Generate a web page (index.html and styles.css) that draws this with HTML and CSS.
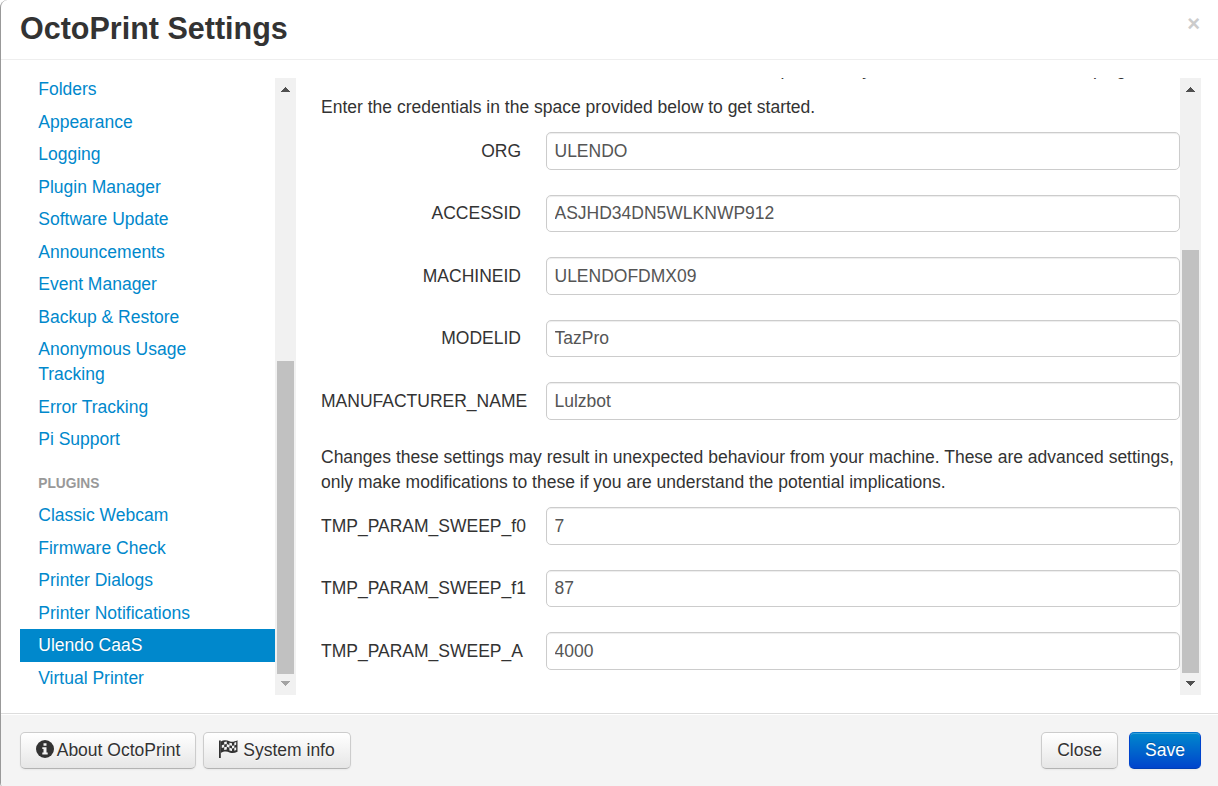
FILE: index.html
```html
<!DOCTYPE html>
<html lang="en">
<head>
<meta charset="utf-8">
<title>OctoPrint Settings</title>
<link rel="stylesheet" href="styles.css">
</head>
<body>
<div class="modal">
  <header class="modal-header">
    <h3>OctoPrint Settings</h3>
    <button class="close" aria-label="Close dialog">×</button>
  </header>
  <main class="modal-body">
    <div class="pane sidebar">
      <ul class="nav">
        <li><a>Folders</a></li>
        <li><a>Appearance</a></li>
        <li><a>Logging</a></li>
        <li><a>Plugin Manager</a></li>
        <li><a>Software Update</a></li>
        <li><a>Announcements</a></li>
        <li><a>Event Manager</a></li>
        <li><a>Backup &amp; Restore</a></li>
        <li><a>Anonymous Usage Tracking</a></li>
        <li><a>Error Tracking</a></li>
        <li><a>Pi Support</a></li>
        <li class="nav-header">Plugins</li>
        <li><a>Classic Webcam</a></li>
        <li><a>Firmware Check</a></li>
        <li><a>Printer Dialogs</a></li>
        <li><a>Printer Notifications</a></li>
        <li class="active"><a>Ulendo CaaS</a></li>
        <li><a>Virtual Printer</a></li>
      </ul>
      <div class="scrollbar">
        <svg class="arrow" viewBox="0 0 21 21"><path d="M6 14L10.500 9L15 14z"/></svg>
        <div class="track"><div class="thumb thumb-nav"></div></div>
        <svg class="arrow dim" viewBox="0 0 21 21"><path d="M6 7L10.500 12L15 7z"/></svg>
      </div>
    </div>
    <div class="pane content">
      <form class="form">
        <p class="lead-line"><span>You need to have an account and the credentials</span><span>provided by Ulendo in order to use the</span><span>plugin</span></p>
        <p>Enter the credentials in the space provided below to get started.</p>
        <div class="group"><label>ORG</label><input value="ULENDO"></div>
        <div class="group"><label>ACCESSID</label><input value="ASJHD34DN5WLKNWP912"></div>
        <div class="group"><label>MACHINEID</label><input value="ULENDOFDMX09"></div>
        <div class="group"><label>MODELID</label><input value="TazPro"></div>
        <div class="group wide"><label>MANUFACTURER_NAME</label><input value="Lulzbot"></div>
        <p>Changes these settings may result in unexpected behaviour from your machine. These are advanced settings, only make modifications to these if you are understand the potential implications.</p>
        <div class="group wide"><label>TMP_PARAM_SWEEP_f0</label><input value="7"></div>
        <div class="group wide"><label>TMP_PARAM_SWEEP_f1</label><input value="87"></div>
        <div class="group wide"><label>TMP_PARAM_SWEEP_A</label><input value="4000"></div>
      </form>
      <div class="scrollbar">
        <svg class="arrow" viewBox="0 0 21 21"><path d="M6 14L10.500 9L15 14z"/></svg>
        <div class="track"><div class="thumb thumb-form"></div></div>
        <svg class="arrow" viewBox="0 0 21 21"><path d="M6 7L10.500 12L15 7z"/></svg>
      </div>
    </div>
  </main>
  <footer class="modal-footer">
    <button class="btn about"><svg class="icon" viewBox="0 0 18 18"><circle cx="9" cy="9" r="9"/><path class="cut" d="M7.500 3.200h3v2.500h-3zM6.300 7.200h4.200v5.300h1.200v1.900H6.300v-1.900h1.200V9.100H6.300z"/></svg>About OctoPrint</button>
    <button class="btn system"><svg class="icon flag" viewBox="0 0 19 18"><path d="M0 .5h1.800V18H0z"/><path d="M1.800 1.500C5-.4 8 .3 10.500 1.300S15.500 1.800 18.500 .3V11.700C15.500 13.200 13 13.500 10.500 12.400S5 11.200 1.800 13z"/><path class="cut" d="M5.200 1.900l2.600-.4v2.600l-2.600.5zM10.400 2.700l2.600.5v2.600l-2.600-.6zM15.300 2.800l1.900-.7v2.600l-1.900.7zM2.800 5.300l2.400-.7v2.600l-2.400.9zM7.800 4.100l2.600 1v2.600l-2.600-.9zM13 5.800l2.300-.4V8l-2.300.4zM5.200 7.200l2.600-.4v2.700l-2.600.4zM10.400 7.700l2.600.7v2.700l-2.600-.5zM15.300 8l1.900-.7v2.700l-1.900.7z"/></svg>System info</button>
    <span class="spacer"></span>
    <button class="btn dismiss">Close</button>
    <button class="btn primary">Save</button>
  </footer>
</div>
</body>
</html>
```

FILE: styles.css
```css
* { box-sizing: border-box; }
html, body { margin: 0; height: 100%; overflow: hidden; background: #fff; }
body, button, input {
  font-family: "Liberation Sans", Arial, sans-serif;
  font-size: 17.5px;
  line-height: 25px;
  color: #333;
}
.modal {
  height: 790px;
  display: flex;
  flex-direction: column;
  border-left: 1px solid #999;
  border-radius: 7.5px 0 0 7.5px;
  overflow: hidden;
  background: #fff;
}
.modal-header {
  height: 60px;
  flex: none;
  display: flex;
  justify-content: space-between;
  padding: 3px 18px 0 19px;
  border-bottom: 1px solid #eee;
}
h3 { margin: 0; font-size: 30.5px; line-height: 50px; }
.close {
  border: 0;
  background: none;
  padding: 0;
  height: 41px;
  font-size: 22px;
  font-weight: bold;
  color: #ccc;
}
.modal-body {
  height: 653px;
  flex: none;
  display: flex;
  gap: 25px;
  padding: 18px 17px 18px 19px;
}
.pane { display: flex; height: 617px; overflow: hidden; }
.sidebar { width: 276px; flex: none; }
.content { flex: 1; }
.nav {
  list-style: none;
  width: 255px;
  margin: -4.5px 0 0;
  padding: 0;
}
.nav a {
  display: block;
  padding: 3.75px 18.25px;
  color: #08c;
}
.nav .nav-header {
  margin-top: 11px;
  padding: 3.75px 18.25px;
  font-size: 13.75px;
  font-weight: bold;
  color: #999;
  text-transform: uppercase;
}
.nav .active a { background: #08c; color: #fff; text-shadow: 0 -1px 0 rgba(0,0,0,.2); }
.nav .nav-header { padding-bottom: 3.6px; }
.scrollbar {
  width: 21px;
  flex: none;
  display: flex;
  flex-direction: column;
  background: #f1f1f1;
}
.arrow { width: 21px; height: 21px; flex: none; fill: #505050; shape-rendering: crispEdges; }
.arrow.dim { fill: #a3a3a3; }
.track { flex: 1; padding: 0 2px; display: flex; align-items: flex-end; }
.thumb { flex: 1; background: #c1c1c1; }
.thumb-nav { height: 313px; }
.thumb-form { height: 423px; margin-bottom: 1px; }
.form { flex: 1; margin-top: -21px; min-width: 0; }
.form p { margin: 0 0 12.5px; }
.form .lead-line { display: grid; grid-template-columns: 459.5px 312.5px auto; white-space: nowrap; }
.group { display: flex; gap: 25px; margin-bottom: 25px; }
.group label {
  width: 200px;
  flex: none;
  display: flex;
  padding-top: 6.6px;
  justify-content: flex-end;
}
.group.wide label { justify-content: flex-start; }
.group input {
  flex: 1;
  height: 37.5px;
  padding: 5.7px 7.5px 4.3px;
  border: 1px solid #ccc;
  border-radius: 5px;
  color: #555;
  background: #fff;
  box-shadow: inset 0 1px 1px rgba(0,0,0,.075);
}
.modal-footer {
  flex: 1;
  display: flex;
  align-items: flex-start;
  padding: 18px 17px 0 19px;
  border-top: 1px solid #ddd;
  background: #f4f4f4;
  box-shadow: inset 0 1px 0 #fff;
}
.spacer { flex: 1; }
.btn {
  height: 37px;
  display: flex;
  align-items: center;
  justify-content: center;
  padding: 0;
  border: 1px solid #ccc;
  border-bottom-color: #b3b3b3;
  border-radius: 5px;
  background: linear-gradient(#fff, #e6e6e6);
  text-shadow: 0 1px 1px rgba(255,255,255,.75);
  box-shadow: inset 0 1px 0 rgba(255,255,255,.2), 0 1px 2px rgba(0,0,0,.05);
}
.about { width: 176px; margin-right: 7px; }
.system { width: 148px; }
.dismiss { width: 77px; margin-right: 11px; }
.primary {
  width: 72px;
  color: #fff;
  border-color: #0074cc #04c #003eb3;
  background: linear-gradient(#08c, #04c);
  text-shadow: 0 -1px 0 rgba(0,0,0,.25);
}
.icon { width: 18px; height: 18px; margin: 0 3px 3px 0; fill: #333; }
.icon .cut { fill: #f4f4f4; }
.flag { width: 19px; margin-right: 5px; }
```
